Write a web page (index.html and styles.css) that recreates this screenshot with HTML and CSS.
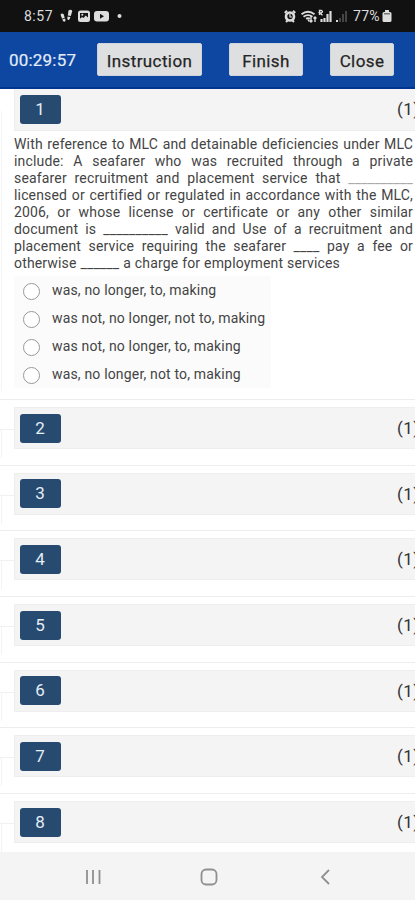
FILE: index.html
```html
<!DOCTYPE html>
<html lang="en">
<head>
<meta charset="utf-8">
<title>Exam</title>
<link rel="stylesheet" href="styles.css">
</head>
<body>
<div class="status">
  <span class="clock">8:57</span>
  <svg class="notif" width="66" height="16" viewBox="0 0 66 16" fill="#ddd">
    <path d="M.5 6.500q1.500-2 3.200-.2l1 3.500-2.700 1zM2.300 11.500l2.700-.9q1.300 2.700-.6 3.200-1.400 0-2.100-2.300zM8.500 2.500q2.500-1.500 3.800.5l-1.500 5-3-.5zM7.500 8.500l2.900.5q-.7 3.600-2.300 2.900-1.300-.5-.6-3.400z"/>
    <rect x="18" y="2.500" width="12" height="11.500" rx="2.500"/>
    <path d="M20 5h8v4.500l-2.300-2-2.200 2.500-1.500-1-2 1.800z" fill="#151515"/>
    <circle cx="22.300" cy="6.700" r="1"/>
    <rect x="34" y="3" width="15" height="10.500" rx="3"/>
    <path d="M40 5.800l4 2.500-4 2.500z" fill="#151515"/>
    <circle cx="59.500" cy="8" r="2"/>
  </svg>
  <svg class="signals" width="68" height="16" viewBox="0 0 68 16" fill="none" stroke="#ddd">
    <circle cx="6" cy="8.500" r="4" stroke-width="2.600"/>
    <path d="M.8 5L3 2.700M11.200 5L9 2.700M2 14l1.500-1.500M10 14l-1.500-1.500" stroke-width="2"/>
    <path d="M6 6v3h2" stroke-width="1.200"/>
    <path d="M17.500 6.200q6.500-5 13 0M19.500 8.700q4.500-3.200 9 0M22 10.800q2-1.200 4 0" stroke-width="1.900"/>
    <path d="M24 11.500l1 2M27 8v6m-1.500-1.500L27 14l1.500-1.500M31 14V9m-1.500 1.500L31 9l1.500 1.500" stroke-width="1.400"/>
    <path d="M35.500 7V2.500h2q2 1 0 2.300h-2l3 2.500" stroke-width="1.300"/>
    <path d="M37.500 14v-3M40.500 14v-4M43.500 14V6M46.500 14V3" stroke-width="2.200"/>
    <path d="M53 14v-2" stroke-width="2"/>
    <path d="M56 14v-4M59 14V6M62 14V3" stroke="#444" stroke-width="2"/>
  </svg>
  <span class="percent">77%</span>
  <svg class="battery" width="10" height="14" viewBox="0 0 10 14"><path d="M3 1h4v2h1q1.500 0 1.500 1.500v7q0 1.500-1.500 1.500H2Q.5 13 .5 11.500v-7Q.5 3 2 3h1z" fill="#ddd"/><path d="M2 4h6v1.500H2z" fill="#777"/></svg>
</div>
<header class="bar">
  <span class="timer">00:29:57</span>
  <button class="btn instruction">Instruction</button>
  <button class="btn finish">Finish</button>
  <button class="btn close">Close</button>
</header>
<main>
  <section class="card first">
    <div class="head"><span class="num">1</span><span class="mark">(1)</span></div>
    <div class="question">
      <p>With reference to MLC and detainable deficiencies under MLC</p>
      <p>include: A seafarer who was recruited through a private</p>
      <p>seafarer recruitment and placement service that <span class="faint">__________</span></p>
      <p>licensed or certified or regulated in accordance with the MLC,</p>
      <p>2006, or whose license or certificate or any other similar</p>
      <p>document is __________ valid and Use of a recruitment and</p>
      <p>placement service requiring the seafarer ____ pay a fee or</p>
      <p class="last">otherwise ______ a charge for employment services</p>
    </div>
    <div class="options">
      <label><i></i><span>was, no longer, to, making</span></label>
      <label><i></i><span>was not, no longer, not to, making</span></label>
      <label><i></i><span>was not, no longer, to, making</span></label>
      <label><i></i><span>was, no longer, not to, making</span></label>
    </div>
  </section>
  <section class="card"><div class="head"><span class="num">2</span><span class="mark">(1)</span></div></section>
  <section class="card"><div class="head"><span class="num">3</span><span class="mark">(1)</span></div></section>
  <section class="card"><div class="head"><span class="num">4</span><span class="mark">(1)</span></div></section>
  <section class="card"><div class="head"><span class="num">5</span><span class="mark">(1)</span></div></section>
  <section class="card"><div class="head"><span class="num">6</span><span class="mark">(1)</span></div></section>
  <section class="card"><div class="head"><span class="num">7</span><span class="mark">(1)</span></div></section>
  <section class="card"><div class="head"><span class="num">8</span><span class="mark">(1)</span></div></section>
</main>
<nav class="nav">
  <svg width="18" height="18" viewBox="0 0 18 18" fill="none" stroke="#909090" stroke-width="1.800"><path d="M3 2v14M9 2v14M15.500 2v14"/></svg>
  <svg width="18" height="18" viewBox="0 0 18 18" fill="none" stroke="#909090" stroke-width="1.800"><rect x="1.500" y="1.500" width="15" height="15" rx="4.500"/></svg>
  <svg width="18" height="18" viewBox="0 0 18 18" fill="none" stroke="#909090" stroke-width="1.800"><path d="M13 2L6 9l7 7"/></svg>
</nav>
</body>
</html>
```
FILE: styles.css
```css
* { box-sizing: border-box; }
body {
  margin: 0;
  width: 415px;
  height: 900px;
  overflow: hidden;
  display: flex;
  flex-direction: column;
  background: #fff;
  color: #333;
  font-family: Roboto, "Liberation Sans", sans-serif;
}
.status {
  flex: none;
  height: 32px;
  background: #111;
  color: #ddd;
  display: flex;
  align-items: center;
  padding-left: 24px;
  font-size: 14px;
}
.clock { width: 36px; letter-spacing: .5px; }
.signals { margin-left: 158px; }
.percent { margin-left: 1px; width: 29px; letter-spacing: .3px; }
.bar {
  flex: none;
  height: 57px;
  background: #0d47a1;
  border-bottom: 2px solid #003594;
  display: flex;
  align-items: center;
  padding-left: 9px;
  color: #e4ecfa;
}
.timer { width: 88px; font-size: 17px; letter-spacing: .2px; padding-top: 1px; -webkit-text-stroke: .2px; }
.btn {
  height: 33px;
  border: 1px solid #cfd3dc;
  border-radius: 2px;
  background: #dedfe0;
  color: #252525;
  padding: 2px 0 0;
  font: 400 17px Roboto, "Liberation Sans", sans-serif;
  letter-spacing: .4px;
  -webkit-text-stroke: .25px;
}
.instruction { width: 105px; }
.finish { width: 74px; margin-left: 27px; }
.close { width: 64px; margin-left: 27px; }
main { flex: none; height: 763px; overflow: hidden; }
.card {
  height: 65.7px;
  padding: 7px 0 0 14px;
  border-top: 1px solid #ededed;
  background: linear-gradient(#f1f1f1, #f1f1f1) 0 29px / 14px 1px no-repeat,
    linear-gradient(#f3f3f3, #f3f3f3) 1px 29px / 1px 29px no-repeat;
}
.card.first {
  height: 310px;
  padding-top: 0;
  border: 0;
  background: linear-gradient(#f5f5f5, #f5f5f5) 1px 22px / 1px 280px no-repeat;
}
.head {
  height: 42px;
  width: 420px;
  border: 1px solid #eee;
  background: #f4f4f4;
  display: flex;
  align-items: center;
  padding-left: 5px;
}
.first .head { border-top: 0; padding-bottom: 1px; }
.num {
  width: 41px;
  height: 29px;
  border-radius: 3px;
  background: #264a70;
  color: #e5edf5;
  font-size: 17px;
  line-height: 29px;
  text-align: center;
  padding-right: 1px;
}
.mark { margin-left: 336px; font-size: 17px; letter-spacing: .4px; }
.question {
  width: 399px;
  padding-top: 5px;
  font-size: 14px;
  line-height: 17px;
  letter-spacing: .16px;
  color: #444;
}
.question p { margin: 0; white-space: nowrap; text-align-last: justify; }
.question .last { width: 326px; }
.faint { color: #aaa; }
.options {
  width: 257px;
  margin-top: 4px;
  padding-left: 9px;
  background: #fbfbfb;
  color: #444;
  font-size: 14px;
  letter-spacing: .17px;
}
.options label { display: flex; align-items: center; height: 28px; }
.options i { width: 17px; height: 17px; margin-top: 2px; border: 1px solid #999; border-radius: 50%; background: #fff; }
.options span { margin: -1px 0 0 12px; }
.nav {
  flex: none;
  height: 48px;
  background: #f4f4f4;
  display: flex;
  align-items: center;
  padding: 2px 0 0 84px;
  gap: 98px;
}
```
